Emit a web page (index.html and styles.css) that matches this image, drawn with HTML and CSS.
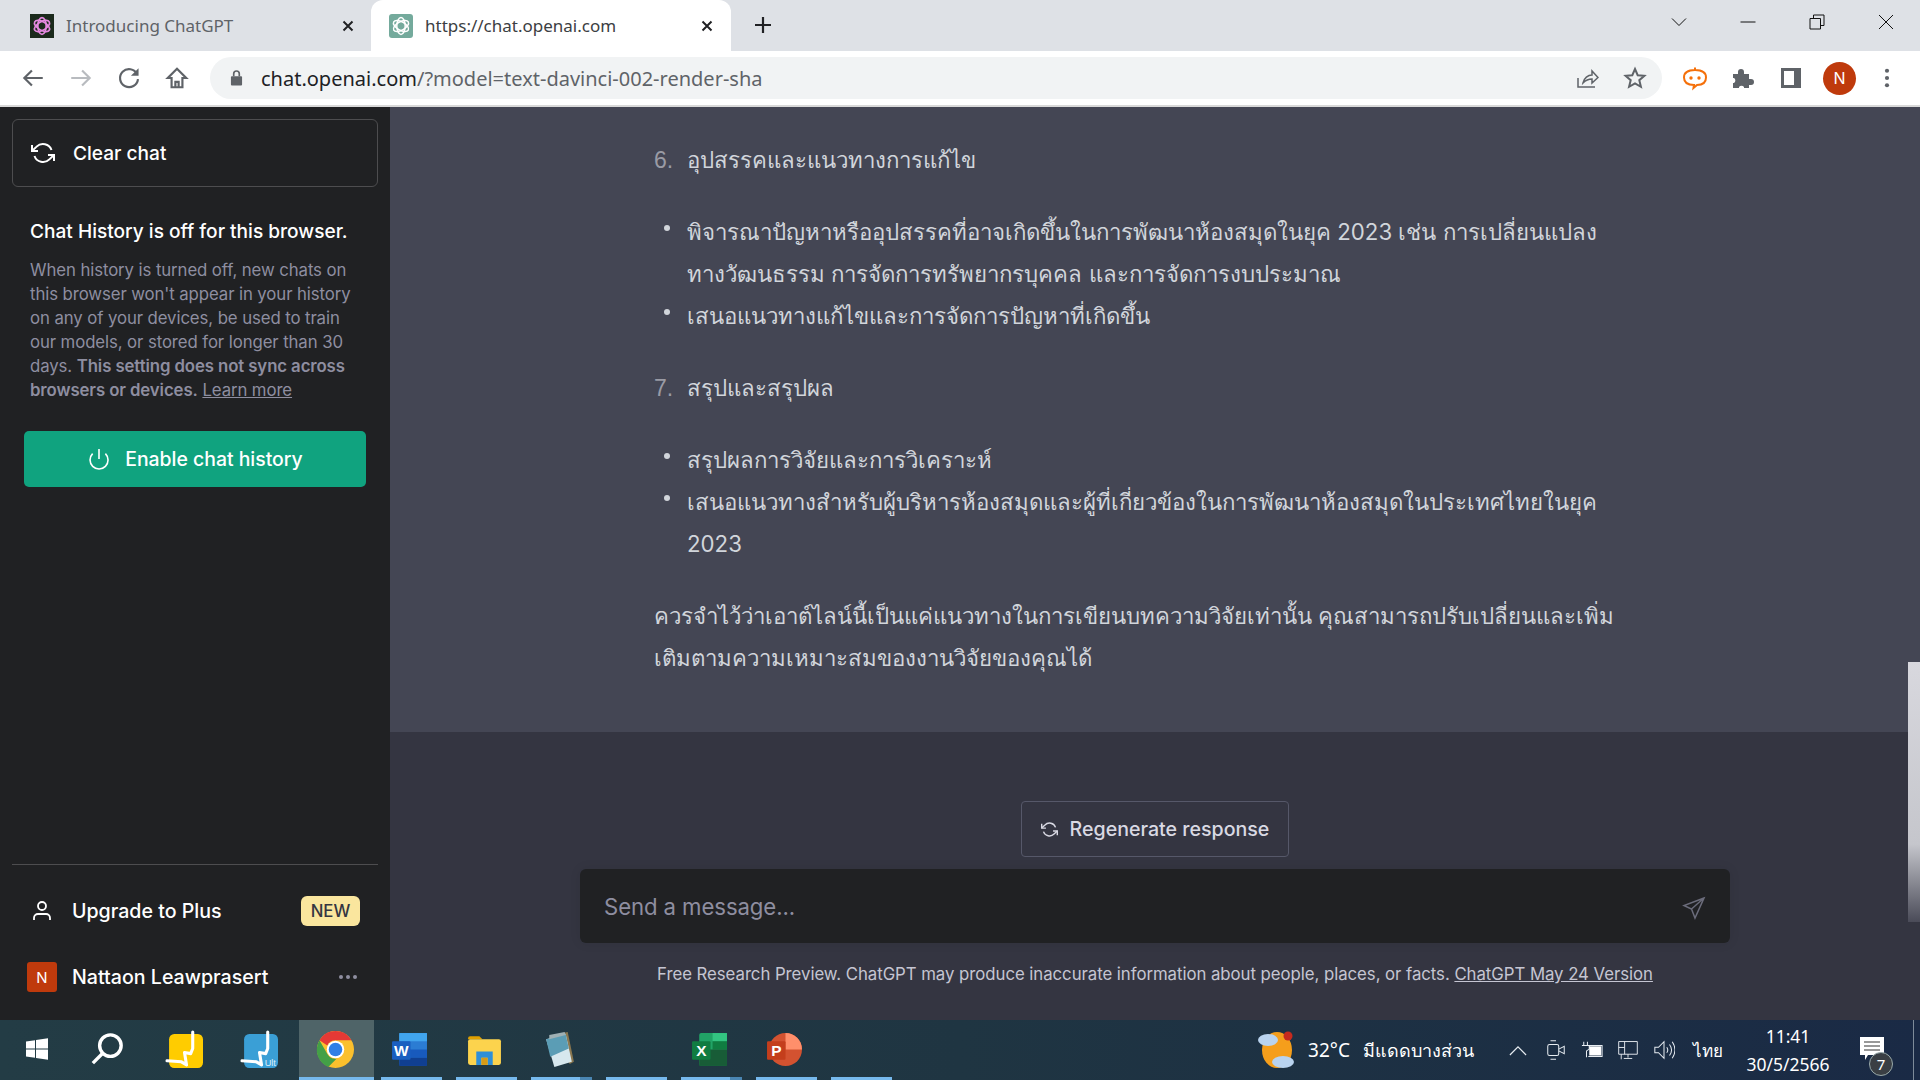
FILE: index.html
```html
<!DOCTYPE html>
<html lang="th">
<head>
<meta charset="utf-8">
<title>ChatGPT</title>
<link rel="stylesheet" href="styles.css">
</head>
<body>
<header class="tabstrip">
  <div class="tab">
    <svg class="favicon fav-dark" viewBox="0 0 24 24"><g fill="none" stroke="#e58ae0" stroke-width="1.700"><ellipse cx="12" cy="12" rx="4.200" ry="8.400"/><ellipse cx="12" cy="12" rx="4.200" ry="8.400" transform="rotate(60 12 12)"/><ellipse cx="12" cy="12" rx="4.200" ry="8.400" transform="rotate(120 12 12)"/></g></svg>
    <span class="tab-title">Introducing ChatGPT</span>
    <svg class="tab-x" viewBox="0 0 12 12"><path d="M1.500 1.500l9 9M10.500 1.500l-9 9"/></svg>
  </div>
  <div class="tab active">
    <svg class="favicon fav-green" viewBox="0 0 24 24"><g fill="none" stroke="#fff" stroke-width="1.500"><ellipse cx="12" cy="12" rx="4.200" ry="8.400"/><ellipse cx="12" cy="12" rx="4.200" ry="8.400" transform="rotate(60 12 12)"/><ellipse cx="12" cy="12" rx="4.200" ry="8.400" transform="rotate(120 12 12)"/></g></svg>
    <span class="tab-title">https://chat.openai.com</span>
    <svg class="tab-x" viewBox="0 0 12 12"><path d="M1.500 1.500l9 9M10.500 1.500l-9 9"/></svg>
  </div>
  <svg class="newtab" viewBox="0 0 18 18"><path d="M9 1v16M1 9h16"/></svg>
  <div class="winctl">
    <svg class="wc" viewBox="0 0 16 16"><path d="M1 4.500l7 7 7-7"/></svg>
    <svg class="wc" viewBox="0 0 16 16"><path d="M0.500 8h15"/></svg>
    <svg class="wc" viewBox="0 0 16 16"><path d="M1 4.500h10.500V15H1zM4.500 4.500V1H15v10.500h-3.500"/></svg>
    <svg class="wc" viewBox="0 0 16 16"><path d="M1 1l14 14M15 1L1 15"/></svg>
  </div>
</header>

<nav class="toolbar">
  <svg class="navbtn" viewBox="0 0 24 24"><path d="M21 12H4M11 5l-7 7 7 7"/></svg>
  <svg class="navbtn off" viewBox="0 0 24 24"><path d="M3 12h17M13 5l7 7-7 7"/></svg>
  <svg class="navbtn" viewBox="0 0 24 24"><path d="M19.500 8.500A8.300 8.300 0 1 0 20.300 13"/><path class="solid" d="M20.800 3v7h-7z"/></svg>
  <svg class="navbtn" viewBox="0 0 24 24"><path d="M12 3.500L3.500 12H7v8.500h10V12h3.500zM10.500 20.500v-5h3v5"/></svg>
  <div class="omnibox">
    <svg class="lock" viewBox="0 0 14 18"><path d="M2 7h10a1 1 0 0 1 1 1v8a1 1 0 0 1-1 1H2a1 1 0 0 1-1-1V8a1 1 0 0 1 1-1z"/><path class="lock-arc" d="M4 7V4.500a3 3 0 0 1 6 0V7"/></svg>
    <span class="url"><span class="host">chat.openai.com</span>/?model=text-davinci-002-render-sha</span>
    <svg class="omni-ic share" viewBox="0 0 24 24"><path d="M3 12v9h17"/><path d="M8 17c1-5 5-8 9-8V5l6 6.500-6 5.500v-4c-3 0-6 1-9 4z"/></svg>
    <svg class="omni-ic star" viewBox="0 0 24 24"><path d="M12 3l2.700 6.200 6.700.6-5.100 4.400 1.600 6.600-5.900-3.500-5.900 3.500 1.600-6.600L2.600 9.800l6.700-.6z"/></svg>
  </div>
  <svg class="tool-ic bot" viewBox="0 0 26 26"><path d="M13 5c7 0 11 2 11 7.500S20 20 15 20l-3.500 3 .5-3c-6 0-10-2-10-7.500S6 5 13 5zM13 5V2.500"/><circle class="bot-eye" cx="9" cy="13" r="1.700"/><circle class="bot-eye" cx="17" cy="13" r="1.700"/></svg>
  <svg class="tool-ic puzzle" viewBox="0 0 24 24"><path d="M3 8h5V6a3 3 0 0 1 6 0v2h5v5h2a3 3 0 0 1 0 6h-2v3h-5v-1a3 3 0 0 0-5 0v1H3v-5h1a3 3 0 0 0 0-5H3z"/></svg>
  <svg class="tool-ic panel" viewBox="0 0 24 24"><path fill-rule="evenodd" d="M2 2h20v20H2zM5 5v14h10V5z"/></svg>
  <div class="avatar">N</div>
  <svg class="tool-ic dots" viewBox="0 0 6 22"><circle cx="3" cy="3" r="2.300"/><circle cx="3" cy="11" r="2.300"/><circle cx="3" cy="19" r="2.300"/></svg>
</nav>

<div class="app">
  <aside class="sidebar">
    <button class="clear">
      <svg class="s-ic" viewBox="0 0 24 24"><path d="M1 4v6h6M23 20v-6h-6"/><path d="M20.500 9A9 9 0 0 0 5.600 5.600L1 10m22 4l-4.600 4.400A9 9 0 0 1 3.500 15"/></svg>
      <span>Clear chat</span>
    </button>
    <div class="notice">
      <h2 class="notice-title">Chat History is off for this browser.</h2>
      <p class="notice-body">When history is turned off, new chats on<br>this browser won't appear in your history<br>on any of your devices, be used to train<br>our models, or stored for longer than 30<br>days. <b>This setting does not sync across<br>browsers or devices.</b> <a class="learn">Learn more</a></p>
    </div>
    <button class="enable">
      <svg class="p-ic" viewBox="0 0 24 24"><path d="M18.400 6.600a9 9 0 1 1-12.770.04M12 2v10"/></svg>
      <span>Enable chat history</span>
    </button>
    <div class="side-foot">
      <div class="row">
        <svg class="u-ic" viewBox="0 0 24 24"><path d="M20 21v-2a4 4 0 0 0-4-4H8a4 4 0 0 0-4 4v2"/><circle cx="12" cy="7" r="4"/></svg>
        <span class="row-label">Upgrade to Plus</span>
        <span class="new">NEW</span>
      </div>
      <div class="row">
        <span class="mini-av">N</span>
        <span class="row-label">Nattaon Leawprasert</span>
        <span class="more"><i></i><i></i><i></i></span>
      </div>
    </div>
  </aside>

  <main class="main">
    <section class="thread">
      <div class="num"><span class="marker">6.</span><span>อุปสรรคและแนวทางการแก้ไข</span></div>
      <ul class="bullets">
        <li>พิจารณาปัญหาหรืออุปสรรคที่อาจเกิดขึ้นในการพัฒนาห้องสมุดในยุค 2023 เช่น การเปลี่ยนแปลง<br>ทางวัฒนธรรม การจัดการทรัพยากรบุคคล และการจัดการงบประมาณ</li>
        <li>เสนอแนวทางแก้ไขและการจัดการปัญหาที่เกิดขึ้น</li>
      </ul>
      <div class="num"><span class="marker">7.</span><span>สรุปและสรุปผล</span></div>
      <ul class="bullets">
        <li>สรุปผลการวิจัยและการวิเคราะห์</li>
        <li>เสนอแนวทางสำหรับผู้บริหารห้องสมุดและผู้ที่เกี่ยวข้องในการพัฒนาห้องสมุดในประเทศไทยในยุค<br>2023</li>
      </ul>
      <p class="closing">ควรจำไว้ว่าเอาต์ไลน์นี้เป็นแค่แนวทางในการเขียนบทความวิจัยเท่านั้น คุณสามารถปรับเปลี่ยนและเพิ่ม<br>เติมตามความเหมาะสมของงานวิจัยของคุณได้</p>
    </section>
    <section class="composer">
      <button class="regen">
        <svg class="r-ic" viewBox="0 0 24 24"><path d="M1 4v6h6M23 20v-6h-6"/><path d="M20.500 9A9 9 0 0 0 5.600 5.600L1 10m22 4l-4.600 4.400A9 9 0 0 1 3.500 15"/></svg>
        <span>Regenerate response</span>
      </button>
      <div class="input">
        <span class="placeholder">Send a message...</span>
        <svg class="send" viewBox="0 0 24 24"><path d="M22 2L2 9.500l7.500 3.500 3.500 9zM9.500 13L22 2"/></svg>
      </div>
      <p class="foot">Free Research Preview. ChatGPT may produce inaccurate information about people, places, or facts. <a class="foot-link">ChatGPT May 24 Version</a></p>
    </section>
    <div class="scrollthumb"></div>
  </main>
</div>

<footer class="taskbar">
  <div class="slot start"><svg class="tb-ic" viewBox="0 0 24 24"><path class="white" d="M1 4.500l9-1.300V11.500H1zM11 3l12-1.800V11.500H11zM1 12.500h9v8.300l-9-1.300zM11 12.500h12v10.300L11 21z"/></svg></div>
  <div class="slot search"><svg class="tb-ic" viewBox="0 0 30 30"><circle cx="18" cy="12" r="9.500" class="wstroke"/><path class="wstroke" d="M11 19l-8.500 8.500"/></svg></div>
  <div class="slot"><svg class="tb-ic big" viewBox="0 0 36 36"><rect x="3" y="3" width="33" height="33" rx="5" fill="#fc0"/><path class="zig" d="M26 1v16l-2 5-6-1 2 12-5-3-14-1"/></svg></div>
  <div class="slot"><svg class="tb-ic big" viewBox="0 0 36 36"><rect x="3" y="3" width="33" height="33" rx="5" fill="#3a9fd6"/><path class="zig" d="M26 1v16l-2 5-6-1 2 12-5-3-14-1"/><text x="23" y="34" class="ult">Ult</text></svg></div>
  <div class="slot running current"><svg class="tb-ic big" viewBox="0 0 36 36"><circle cx="18" cy="18" r="18" fill="#fbc02d"/><path d="M18 0a18 18 0 0 1 15.600 9H18a9 9 0 0 0-8 5L2.400 9A18 18 0 0 1 18 0z" fill="#e53935"/><path d="M2.400 9L10.200 22.500a9 9 0 0 0 8.800 4.400L11 35A18 18 0 0 1 2.400 9z" fill="#43a047"/><circle cx="18" cy="18" r="8.500" fill="#fff"/><circle cx="18" cy="18" r="6.600" fill="#2f7fe6"/></svg></div>
  <div class="slot running"><svg class="tb-ic big" viewBox="0 0 36 36"><rect x="8" y="2" width="27" height="32" rx="2" fill="#2b7cd3"/><rect x="8" y="2" width="27" height="8" fill="#41a5ee"/><rect x="8" y="18" width="27" height="8" fill="#185abd"/><rect x="8" y="26" width="27" height="8" fill="#103f91"/><rect x="1" y="10" width="18" height="18" rx="1" fill="#1a5fc0"/><text x="10" y="24" class="ol">W</text></svg></div>
  <div class="slot running"><svg class="tb-ic big" viewBox="0 0 36 36"><path d="M2 7a2 2 0 0 1 2-2h9l3 3h-14z" fill="#e0a000"/><rect x="2" y="8" width="32" height="25" rx="2" fill="#fcd34d"/><path d="M10 33V20h16v13h-5v-7h-6v7z" fill="#2f8fd8"/><rect x="15" y="26" width="6" height="7" fill="#d89b16"/></svg></div>
  <div class="slot running split"><svg class="tb-ic big" viewBox="0 0 36 36"><path d="M12 4l14-3 6 29-4 2z" fill="#8a7750"/><path d="M5 8l19-5 6 27-17 5z" fill="#d7e8ee"/><path d="M5 8l19-5 3 14-18 8z" fill="#5b9db5"/><path d="M8 4l15-3 1 3L8 8z" fill="#9fb0b4"/></svg></div>
  <div class="slot running"></div>
  <div class="slot running split"><svg class="tb-ic big" viewBox="0 0 36 36"><rect x="8" y="2" width="27" height="32" rx="2" fill="#21a366"/><rect x="21" y="2" width="14" height="8" fill="#33c481"/><rect x="21" y="10" width="14" height="8" fill="#107c41"/><rect x="8" y="18" width="27" height="16" fill="#185c37"/><rect x="1" y="10" width="18" height="18" rx="1" fill="#107c41"/><text x="10" y="24" class="ol">X</text></svg></div>
  <div class="slot running"><svg class="tb-ic big" viewBox="0 0 36 36"><circle cx="19" cy="18" r="16" fill="#d35230"/><path d="M19 2a16 16 0 0 1 16 16H19z" fill="#ff8f6b"/><rect x="1" y="10" width="18" height="18" rx="1" fill="#c43e1c"/><text x="10" y="24" class="ol">P</text></svg></div>
  <div class="slot running"></div>

  <div class="tray">
    <svg class="weather" viewBox="0 0 40 40"><ellipse cx="20" cy="20" rx="15" ry="18" fill="#f59e1b"/><circle cx="31" cy="6" r="4.500" fill="#c62a1e"/><ellipse cx="11" cy="10" rx="10" ry="6" fill="#b9d3ef"/><ellipse cx="26" cy="32" rx="11" ry="6" fill="#b9d3ef"/></svg>
    <span class="temp">32°C</span>
    <span class="wtext">มีแดดบางส่วน</span>
    <svg class="sys caret" viewBox="0 0 20 12"><path d="M1 11l9-9 9 9"/></svg>
    <svg class="sys" viewBox="0 0 20 24"><rect x="1" y="6" width="12" height="12" rx="2"/><path d="M13 11l6-3v8l-6-3M4 2h6M4 22h6"/></svg>
    <svg class="sys" viewBox="0 0 24 22"><path d="M3 2v4M7 2v4M1 6h8v4l-3 2v7"/><rect class="fillw" x="9" y="7" width="13" height="10"/><path d="M8 6h15v12H8"/></svg>
    <svg class="sys" viewBox="0 0 26 24"><path d="M2 2h22v15H2zM9 2v15M2 9h7M13 17v4M8 22h10M5 17v6"/></svg>
    <svg class="sys" viewBox="0 0 24 24"><path d="M2 9h4l6-6v18l-6-6H2zM15 9c1.500 2 1.500 4 0 6M18 6c3 4 3 8 0 12M21 3c4 6 4 12 0 18"/></svg>
    <span class="lang">ไทย</span>
    <div class="clock"><span>11:41</span><span>30/5/2566</span></div>
    <div class="notif">
      <svg class="note" viewBox="0 0 24 24"><path class="white" d="M0 0h24v18H8l-3 5v-5H0z"/><path class="lines" d="M4 5h16M4 9h16M4 13h16"/></svg>
      <span class="badge">7</span>
    </div>
    <span class="edge"></span>
  </div>
</footer>
</body>
</html>
```

FILE: styles.css
```css
* { box-sizing: border-box; }
html, body { margin: 0; padding: 0; height: 1080px; overflow: hidden; }
body { display: flex; flex-direction: column; width: 1920px; background: #fff; font-family: Inter, "Noto Sans", "Liberation Sans", sans-serif; }
button { font: inherit; background: none; cursor: pointer; }
p, h2, ul { margin: 0; padding: 0; }

/* browser chrome */
.tabstrip { height: 51px; background: #dee1e6; display: flex; align-items: stretch; flex: none; }
.tab { width: 360px; padding: 0 6px 0 30px; margin-right: -1px; display: flex; align-items: center; color: #5f6368; font-family: "Noto Sans", "Liberation Sans", sans-serif; font-size: 17px; }
.tab.active { width: 360px; background: #fff; border-radius: 12px 12px 0 0; color: #3c4043; padding: 0 18px; margin-left: 12px; }
.favicon { width: 24px; height: 24px; flex: none; margin-right: 12px; }
.fav-dark { background: #1b2a1c; }
.fav-green { background: #74aa9c; border-radius: 3px; }
.tab-title { flex: 1; white-space: nowrap; }
.tab-x { width: 12px; height: 12px; fill: none; stroke: #202124; stroke-width: 2; }
.newtab { width: 18px; height: 18px; margin: 16px 0 0 24px; fill: none; stroke: #202124; stroke-width: 2.200; }
.winctl { margin-left: auto; display: flex; padding-right: 26px; gap: 53px; padding-top: 14px; }
.wc { width: 16px; height: 16px; fill: none; stroke: #111; stroke-width: 1; }

.toolbar { height: 56px; flex: none; background: #fff; border-bottom: 2px solid #d9d9d9; display: flex; align-items: center; padding: 0 0 0 20px; }
.navbtn { width: 26px; height: 26px; margin-right: 22px; fill: none; stroke: #5f6368; stroke-width: 2; }
.navbtn.off { stroke: #b8bbbf; }
.navbtn .solid { fill: #5f6368; stroke: none; }
.navbtn:nth-of-type(4) { margin-right: 20px; }
.omnibox { width: 1452px; height: 42px; background: #f1f3f4; border-radius: 21px; display: flex; align-items: center; padding-left: 20px; }
.lock { width: 13px; height: 18px; margin-right: 18px; fill: #5f6368; stroke: none; }
.lock .lock-arc { fill: none; stroke: #5f6368; stroke-width: 1.800; }
.url { flex: 1; font-family: "Noto Sans", "Liberation Sans", sans-serif; font-size: 20px; color: #5f6368; white-space: nowrap; letter-spacing: 0; }
.host { color: #202124; }
.omni-ic { width: 24px; height: 24px; fill: none; stroke: #5f6368; stroke-width: 1.500; margin-right: 24px; }
.omni-ic.star { stroke-width: 2; margin-right: 15px; }
.tool-ic { flex: none; }
.bot { width: 26px; height: 26px; margin-left: 20px; fill: none; stroke: #f5700a; stroke-width: 2; }
.bot .bot-eye { fill: #f5700a; stroke: none; }
.puzzle { width: 24px; height: 24px; margin-left: 22px; fill: #5f6368; }
.panel { width: 24px; height: 24px; margin-left: 25px; fill: #5f6368; }
.avatar { width: 33px; height: 33px; margin-left: 20px; border-radius: 50%; background: #bf3a0c; color: #fff; font-size: 16px; display: flex; align-items: center; justify-content: center; flex: none; }
.dots { width: 6px; height: 20px; margin-left: 28px; fill: #5f6368; }

/* app */
.app { flex: 1; display: flex; min-height: 0; }
.sidebar { width: 390px; flex: none; background: #202123; display: flex; flex-direction: column; padding: 12px 12px 10px; color: #fff; }
.clear { height: 68px; border: 1px solid #4d4d4f; border-radius: 6px; display: flex; align-items: center; gap: 18px; padding: 0 0 0 18px; color: #fff; font-size: 19.100px; font-weight: 500; }
.s-ic { width: 24px; height: 24px; fill: none; stroke: #fff; stroke-width: 2; flex: none; }
.notice { padding: 31px 18px 0; }
.notice-title { font-size: 19.100px; font-weight: 500; line-height: 26px; white-space: nowrap; }
.notice-body { margin-top: 14px; font-size: 16.800px; line-height: 24px; color: #8e8ea0; white-space: nowrap; letter-spacing: -0.1px; }
.notice-body b { font-weight: 600; }
.learn { text-decoration: underline; }
.enable { height: 56px; margin: 29px 12px 0; background: #10a37f; border: 0; border-radius: 5px; color: #fff; display: flex; align-items: center; justify-content: center; gap: 14px; font-size: 19.400px; font-weight: 500; }
.p-ic { width: 24px; height: 24px; fill: none; stroke: #fff; stroke-width: 1.600; flex: none; }
.side-foot { margin-top: auto; border-top: 1px solid #4d4d4f; padding: 13px 0 0; display: flex; flex-direction: column; }
.row { height: 66px; display: flex; align-items: center; padding: 0 18px 0 15px; font-size: 19.600px; font-weight: 500; }
.u-ic { width: 24px; height: 24px; margin: 0 18px 0 3px; fill: none; stroke: #fff; stroke-width: 1.800; flex: none; }
.mini-av { width: 30px; height: 30px; margin-right: 15px; border-radius: 3px; background: #bf3a0c; font-size: 15px; font-weight: 400; display: flex; align-items: center; justify-content: center; flex: none; }
.row-label { flex: 1; white-space: nowrap; }
.new { width: 59px; height: 30px; background: #fae69e; color: #343541; border-radius: 6px; font-size: 16.800px; display: flex; align-items: center; justify-content: center; }
.more { display: flex; gap: 3px; padding-right: 3px; }
.more i { width: 4px; height: 4px; border-radius: 50%; background: #8e8ea0; }

.main { flex: 1; display: flex; flex-direction: column; position: relative; min-width: 0; }
.thread { height: 625px; flex: none; background: #444654; color: #d1d5db; padding: 32px 0 0 264px; font-family: Inter, "Noto Sans", sans-serif; font-size: 22.250px; line-height: 42px; white-space: nowrap; }
.num { display: flex; }
.marker { width: 33px; color: #9a9ba5; font-family: "Liberation Sans", sans-serif; font-size: 23px; }
.bullets { list-style: none; margin: 30px 0; padding-left: 33px; }
.bullets li { position: relative; }
.bullets li::before { content: ""; position: absolute; left: -23px; top: 14px; width: 6px; height: 6px; border-radius: 50%; background: #d1d5db; }
.closing { margin-top: 30px; }

.composer { flex: 1; background: #343541; display: flex; flex-direction: column; align-items: center; padding-top: 69px; }
.regen { width: 268px; height: 56px; border: 1px solid #565869; border-radius: 4px; color: #d9d9e3; display: flex; align-items: center; justify-content: center; gap: 12px; font-size: 19.600px; font-weight: 500; white-space: nowrap; padding: 0; }
.r-ic { width: 17px; height: 17px; fill: none; stroke: #d9d9e3; stroke-width: 2; flex: none; }
.input { width: 1150px; height: 74px; margin-top: 12px; background: #202123; border-radius: 6px; display: flex; align-items: center; justify-content: space-between; padding: 0 24px 0 24px; box-shadow: 0 0 12px rgba(0,0,0,.08); }
.placeholder { font-size: 22.200px; color: #8e8ea0; letter-spacing: -0.1px; }
.send { width: 24px; height: 24px; fill: none; stroke: #6b6c7b; stroke-width: 1.500; margin-top: 4px; }
.foot { margin-top: 19px; font-size: 16.800px; line-height: 24px; color: #c5c5d2; white-space: nowrap; letter-spacing: -0.05px; }
.foot-link { text-decoration: underline; }
.scrollthumb { position: absolute; right: 0; top: 555px; width: 12px; height: 260px; background: linear-gradient(180deg, #d8d8de 0%, #c5c6cc 70%, #4a4b58 100%); }

/* taskbar */
.taskbar { height: 60px; flex: none; background: linear-gradient(90deg, #233c45 0%, #1f3542 50%, #1a2a45 100%); display: flex; color: #fff; font-family: "Noto Sans", "Liberation Sans", sans-serif; }
.slot { width: 75px; height: 60px; flex: none; display: flex; align-items: center; justify-content: center; position: relative; padding-bottom: 2px; }
.slot.start { width: 73px; }
.slot.search { width: 76px; }
.slot.running::after { content: ""; position: absolute; left: 7px; right: 7px; bottom: 0; height: 3px; background: #76b9ed; }
.slot.current { background: #4f6468; width: 75px; }
.slot.current::after { left: 0; right: 0; }
.slot.split::after { background: linear-gradient(90deg, #76b9ed 80%, #4a86b3 80%); }
.tb-ic { width: 24px; height: 24px; }
.search .tb-ic { width: 34px; height: 34px; margin-left: -8px; }
.tb-ic.big { width: 37px; height: 37px; overflow: visible; margin-right: 5px; }
.current .tb-ic.big { margin-right: 2px; }
.white { fill: #fff; }
.wstroke { fill: none; stroke: #fff; stroke-width: 3; }
.zig { fill: none; stroke: #fff; stroke-width: 3; stroke-linecap: round; stroke-linejoin: round; }
.ult { font-size: 9px; fill: #dfeffa; font-family: "Liberation Sans", sans-serif; }
.ol { font-size: 15px; font-weight: 700; fill: #fff; text-anchor: middle; font-family: "Liberation Sans", sans-serif; }
.tray { margin-left: auto; display: flex; align-items: center; padding-right: 0; font-size: 18px; height: 60px; }
.weather { width: 40px; height: 40px; margin-right: 11px; }
.temp { font-size: 19px; margin-right: 13px; }
.wtext { font-size: 18px; margin-right: 35px; white-space: nowrap; }
.sys { width: 22px; height: 22px; margin-right: 14px; fill: none; stroke: #e8edf2; stroke-width: 1.100; flex: none; }
.sys.caret { width: 18px; height: 11px; margin-right: 18px; stroke-width: 1.300; }
.sys .fillw { fill: #fff; stroke: none; }
.lang { font-size: 17px; margin-left: 4px; margin-right: 22px; }
.clock { display: flex; flex-direction: column; align-items: center; width: 86px; line-height: 28px; font-size: 17.500px; margin-right: 25px; }
.notif { width: 38px; height: 44px; position: relative; margin-right: 19px; }
.note { width: 24px; height: 26px; position: absolute; left: 4px; top: 8px; }
.note .lines { stroke: #333; stroke-width: 1.200; fill: none; }
.badge { position: absolute; left: 13px; top: 24px; width: 24px; height: 24px; border-radius: 50%; background: #3a3f44; border: 1px solid #9aa; font-size: 15px; display: flex; align-items: center; justify-content: center; }
.edge { width: 1px; height: 60px; background: #7d8b99; margin-right: 6px; }
```
